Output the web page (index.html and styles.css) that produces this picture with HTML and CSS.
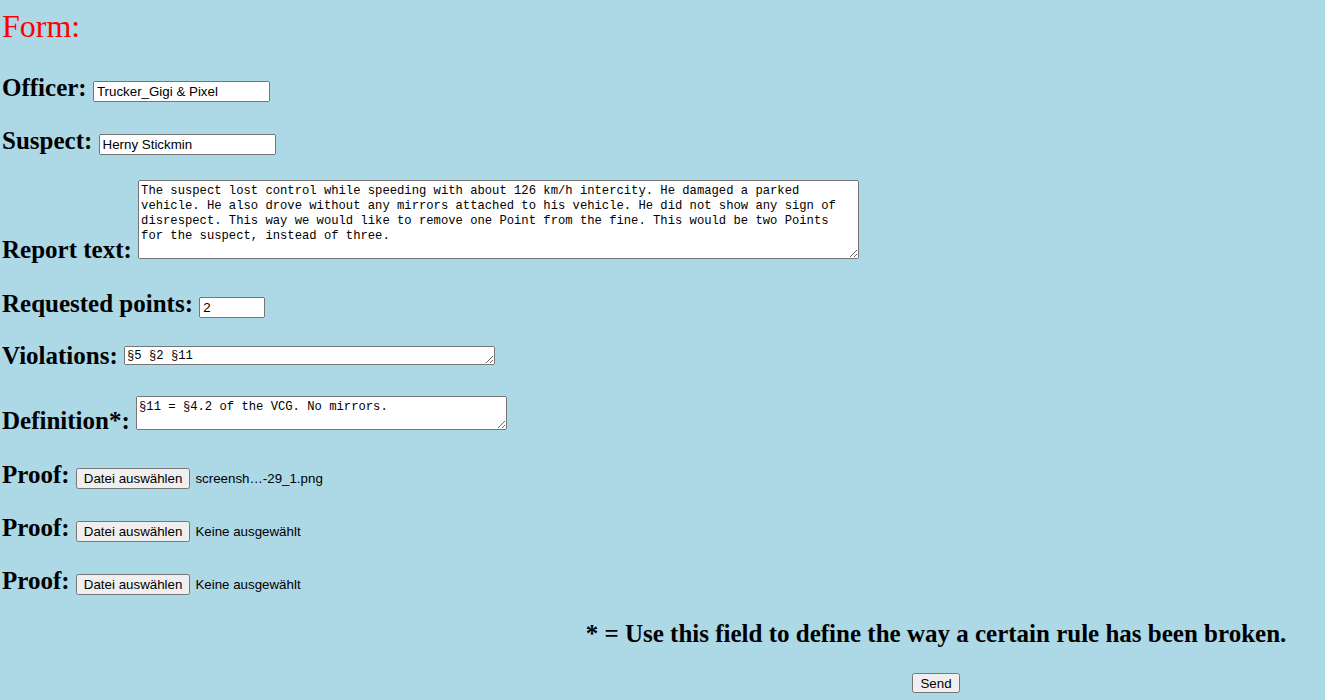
FILE: index.html
```html
<!DOCTYPE html>
<html lang="de">
<head>
<meta charset="utf-8">
<title>Form</title>
<link rel="stylesheet" href="styles.css">
</head>
<body>
<form class="form">
  <h1 class="title">Form:</h1>
  <h2 class="row">Officer: <input class="field field-wide" type="text" value="Trucker_Gigi &amp; Pixel"></h2>
  <h2 class="row">Suspect: <input class="field field-wide" type="text" value="Herny Stickmin"></h2>
  <h2 class="row row--report">Report text: <textarea class="area area-report">The suspect lost control while speeding with about 126 km/h intercity. He damaged a parked
vehicle. He also drove without any mirrors attached to his vehicle. He did not show any sign of
disrespect. This way we would like to remove one Point from the fine. This would be two Points
for the suspect, instead of three.</textarea></h2>
  <h2 class="row row--points">Requested points: <input class="field field-short" type="text" value="2"></h2>
  <h2 class="row row--violations">Violations: <textarea class="area area-one">§5 §2 §11</textarea></h2>
  <h2 class="row row--definition">Definition*: <textarea class="area area-two">§11 = §4.2 of the VCG. No mirrors.</textarea></h2>
  <h2 class="row row--proof">Proof: <button type="button" class="file-btn">Datei auswählen</button><span class="file-name">screensh…-29_1.png</span></h2>
  <h2 class="row">Proof: <button type="button" class="file-btn">Datei auswählen</button><span class="file-name">Keine ausgewählt</span></h2>
  <h2 class="row">Proof: <button type="button" class="file-btn">Datei auswählen</button><span class="file-name">Keine ausgewählt</span></h2>
  <div class="footer">
    <h2 class="note">* = Use this field to define the way a certain rule has been broken.</h2>
    <button type="submit" class="send">Send</button>
  </div>
</form>
</body>
</html>
```

FILE: styles.css
```css
html {
  background: #add8e6;
}

body {
  margin: 0;
  padding: 0 0 0 2px;
  background: #add8e6;
  color: #000;
  font-family: "Liberation Serif", "Times New Roman", serif;
}

.form {
  margin: 0;
}

.title {
  margin: 8px 0 29px;
  font-size: 32px;
  line-height: 36px;
  font-weight: normal;
  color: #ff0000;
}

.row {
  margin: 24px 0 0;
  font-size: 25px;
  line-height: 29px;
  font-weight: bold;
}

.row--report {
  margin-top: 25px;
}

.row--points {
  margin-top: 25px;
}

.row--violations {
  margin-top: 23px;
}

.row--definition {
  margin-top: 26px;
}

.row--proof {
  margin-top: 25px;
}

.field {
  box-sizing: border-box;
  height: 21px;
  margin: 0;
  font-family: "Liberation Sans", Arial, sans-serif;
  font-size: 13.33px;
  font-weight: normal;
  vertical-align: baseline;
}

.field-wide {
  width: 177px;
}

.field-short {
  width: 66px;
}

.area {
  box-sizing: border-box;
  margin: 0;
  padding: 3px 2px 2px;
  font-family: "Liberation Mono", "DejaVu Sans Mono", monospace;
  font-size: 12.2px;
  line-height: 15px;
  font-weight: normal;
  vertical-align: -1px;
}

.area-report {
  width: 721px;
  height: 79px;
}

.area-one {
  width: 371px;
  height: 19px;
  padding-top: 2px;
}

.area-two {
  width: 371px;
  height: 34px;
}

.file-btn {
  box-sizing: border-box;
  height: 21px;
  margin: 0;
  font-family: "Liberation Sans", Arial, sans-serif;
  font-size: 13.33px;
  font-weight: normal;
}

.file-name {
  margin-left: 5px;
  font-family: "Liberation Sans", Arial, sans-serif;
  font-size: 13.33px;
  line-height: 15px;
  font-weight: normal;
}

.footer {
  display: flex;
  flex-direction: column;
  align-items: center;
  padding-left: 545px;
}

.note {
  margin: 24px 0 0;
  font-size: 25px;
  line-height: 29px;
  font-weight: bold;
}

.send {
  box-sizing: border-box;
  height: 20px;
  margin: 25px 0 0;
  font-family: "Liberation Sans", Arial, sans-serif;
  font-size: 13.33px;
}
```
